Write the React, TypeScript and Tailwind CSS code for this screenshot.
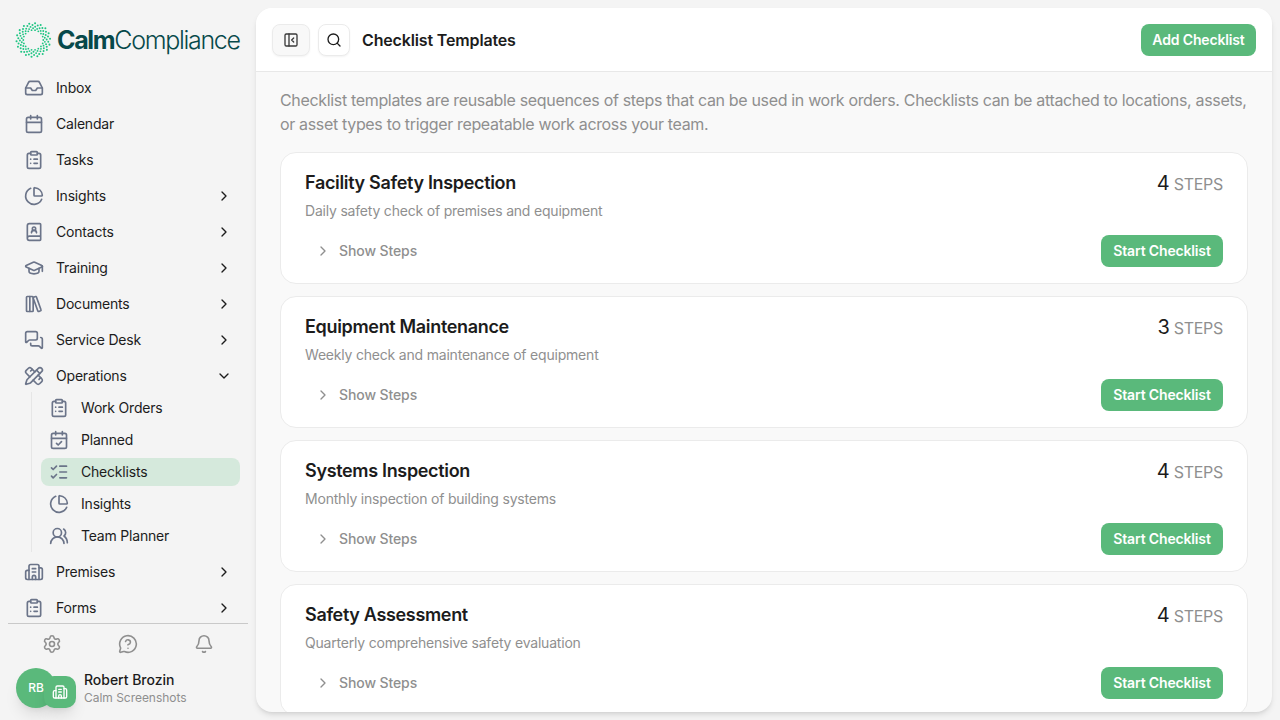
import {
  Bell,
  BookUser,
  Building2,
  Calendar,
  CalendarCheck,
  ChartPie,
  ChevronDown,
  ChevronRight,
  ClipboardList,
  GraduationCap,
  Inbox,
  LibraryBig,
  ListChecks,
  MessageCircleQuestionMark,
  MessagesSquare,
  PanelLeftClose,
  PencilRuler,
  Search,
  Settings,
  UsersRound,
} from 'lucide-react';

const mainNav = [
  { label: 'Inbox', icon: Inbox },
  { label: 'Calendar', icon: Calendar },
  { label: 'Tasks', icon: ClipboardList },
  { label: 'Insights', icon: ChartPie, more: true },
  { label: 'Contacts', icon: BookUser, more: true },
  { label: 'Training', icon: GraduationCap, more: true },
  { label: 'Documents', icon: LibraryBig, more: true },
  { label: 'Service Desk', icon: MessagesSquare, more: true },
  {
    label: 'Operations',
    icon: PencilRuler,
    more: true,
    children: [
      { label: 'Work Orders', icon: ClipboardList },
      { label: 'Planned', icon: CalendarCheck },
      { label: 'Checklists', icon: ListChecks, active: true },
      { label: 'Insights', icon: ChartPie },
      { label: 'Team Planner', icon: UsersRound },
    ],
  },
  { label: 'Premises', icon: Building2, more: true },
  { label: 'Forms', icon: ClipboardList, more: true },
];

const templates = [
  { title: 'Facility Safety Inspection', description: 'Daily safety check of premises and equipment', steps: 4 },
  { title: 'Equipment Maintenance', description: 'Weekly check and maintenance of equipment', steps: 3 },
  { title: 'Systems Inspection', description: 'Monthly inspection of building systems', steps: 4 },
  { title: 'Safety Assessment', description: 'Quarterly comprehensive safety evaluation', steps: 4 },
];

// 18 curved arms of 5 dots each
const dots = Array.from({ length: 18 }).flatMap((_, arm) =>
  Array.from({ length: 5 }).map((_, i) => {
    const angle = ((arm * 20 + i * 9) * Math.PI) / 180;
    const r = 10 + i * 1.7;
    return { x: 17.3 + r * Math.cos(angle), y: 18 + r * Math.sin(angle), r: 0.9 + i * 0.03 };
  })
);

function Logo() {
  return (
    <svg width="232" height="38" viewBox="0 0 232 38" role="img" aria-label="CalmCompliance" className="overflow-visible">
      <g fill="#1fc583">
        {dots.map((d, i) => (
          <circle key={i} cx={d.x} cy={d.y} r={d.r} />
        ))}
      </g>
      <text x="41" y="27.3" fill="#07494a" fontFamily="Inter, sans-serif" fontSize="25" textLength="184" lengthAdjust="spacing">
        <tspan fontWeight="700">Calm</tspan>
        <tspan fontWeight="300">Compliance</tspan>
      </text>
    </svg>
  );
}

function Sidebar() {
  return (
    <aside className="flex h-full w-64 shrink-0 flex-col">
      <div className="flex h-[70px] shrink-0 items-start pt-[22px] pl-4">
        <Logo />
      </div>
      <nav className="min-h-0 flex-1 overflow-hidden px-4 tracking-[-0.2px]">
        {mainNav.map(({ label, icon: Icon, more, children }) => (
          <div key={label}>
            <div className="flex h-9 items-center gap-3 px-2 text-sm text-[#1c1c1c]">
              <Icon size={20} strokeWidth={2} className="shrink-0 text-[#6b7489]" />
              <span className="flex-1">{label}</span>
              {more && (children ? <ChevronDown size={16} className="shrink-0" /> : <ChevronRight size={16} className="shrink-0" />)}
            </div>
            {children && (
              <div className="-mt-0.5 mb-0.5 ml-[15px] border-l border-[#e6e6e6] pl-[9px]">
                {children.map((child) => (
                  <div key={child.label} className="py-0.5">
                    <div
                      className={`flex h-7 items-center gap-3 rounded-lg px-2 text-sm text-[#1c1c1c] ${child.active ? 'bg-[#d5e9dc]' : ''}`}
                    >
                      <child.icon size={20} strokeWidth={2} className="shrink-0 text-[#6b7489]" />
                      <span>{child.label}</span>
                    </div>
                  </div>
                ))}
              </div>
            )}
          </div>
        ))}
      </nav>
      <div className="mx-2 flex h-[41px] shrink-0 items-center justify-between border-t border-[#c9c9c9] px-[34px] text-[#8f8f8f]">
        <Settings size={20} strokeWidth={1.9} />
        <MessageCircleQuestionMark size={20} strokeWidth={1.9} />
        <Bell size={20} strokeWidth={1.9} />
      </div>
      <div className="flex h-14 shrink-0 items-start px-4 pt-1">
        <div className="relative h-10 w-[60px]">
          <div className="flex size-10 items-center justify-center rounded-full bg-[#5ab97b] text-xs font-medium text-white shadow-lg">RB</div>
          <div className="absolute top-2 left-7 flex size-8 items-center justify-center rounded-[10px] bg-[#5ab97b] text-white shadow-lg">
            <Building2 size={16} strokeWidth={2} />
          </div>
        </div>
        <div className="ml-2 pt-0.5">
          <div className="text-sm leading-5 font-medium tracking-[-0.03px] text-[#1c1c1c]">Robert Brozin</div>
          <div className="text-xs leading-4 tracking-[-0.03px] text-[#8f8f8f]">Calm Screenshots</div>
        </div>
      </div>
    </aside>
  );
}

export default function App() {
  return (
    <div className="flex h-screen w-screen overflow-hidden bg-[#f4f4f4] font-[Inter,sans-serif]">
      <Sidebar />
      <main className="my-2 mr-2 flex min-w-0 flex-1 flex-col overflow-hidden rounded-2xl bg-[#f9f9f9] shadow-md">
        <header className="flex h-16 shrink-0 items-center border-b border-[#e8e8e8] bg-white px-4">
          <button className="flex h-8 w-[38px] items-center justify-center rounded-lg border border-[#ebebeb] bg-[#f8f8f8] text-[#3a3a3a] shadow-xs">
            <PanelLeftClose size={16} />
          </button>
          <button className="ml-2 flex size-8 items-center justify-center rounded-lg border border-[#ebebeb] bg-white text-[#1c1c1c] shadow-xs">
            <Search size={16} />
          </button>
          <h1 className="ml-3 flex-1 text-base font-semibold tracking-[-0.15px] text-[#1c1c1c]">Checklist Templates</h1>
          <button className="h-8 w-[115px] rounded-lg bg-[#5ab97b] text-sm font-semibold tracking-[-0.15px] text-white">Add Checklist</button>
        </header>

        <div className="min-h-0 flex-1 overflow-hidden px-6 pt-4">
          <p className="text-base tracking-[-0.335px] text-[#8f8f8f]">
            Checklist templates are reusable sequences of steps that can be used in work orders. Checklists can be attached to locations, assets,
            or asset types to trigger repeatable work across your team.
          </p>
          <div className="mt-4 flex flex-col gap-3">
            {templates.map((t) => (
              <section key={t.title} className="h-[132px] rounded-2xl border border-[#ebebeb] bg-white px-6 pt-4">
                <div className="flex h-7 items-center justify-between">
                  <h2 className="text-lg font-semibold tracking-[-0.33px] text-[#1c1c1c]">{t.title}</h2>
                  <div className="text-base tracking-[-0.28px] text-[#8f8f8f]">
                    <span className="text-xl text-[#1c1c1c]">{t.steps}</span> STEPS
                  </div>
                </div>
                <p className="mt-1 text-sm tracking-[-0.2px] text-[#8f8f8f]">{t.description}</p>
                <div className="mt-3.5 flex items-center justify-between">
                  <button className="flex h-8 items-center gap-2 pl-2.5 text-sm font-[550] tracking-[-0.1px] text-[#8f8f8f]">
                    <ChevronRight size={16} />
                    Show Steps
                  </button>
                  <button className="h-8 w-[122px] rounded-lg bg-[#5ab97b] text-sm font-semibold tracking-[-0.15px] text-white">
                    Start Checklist
                  </button>
                </div>
              </section>
            ))}
          </div>
        </div>
      </main>
    </div>
  );
}
